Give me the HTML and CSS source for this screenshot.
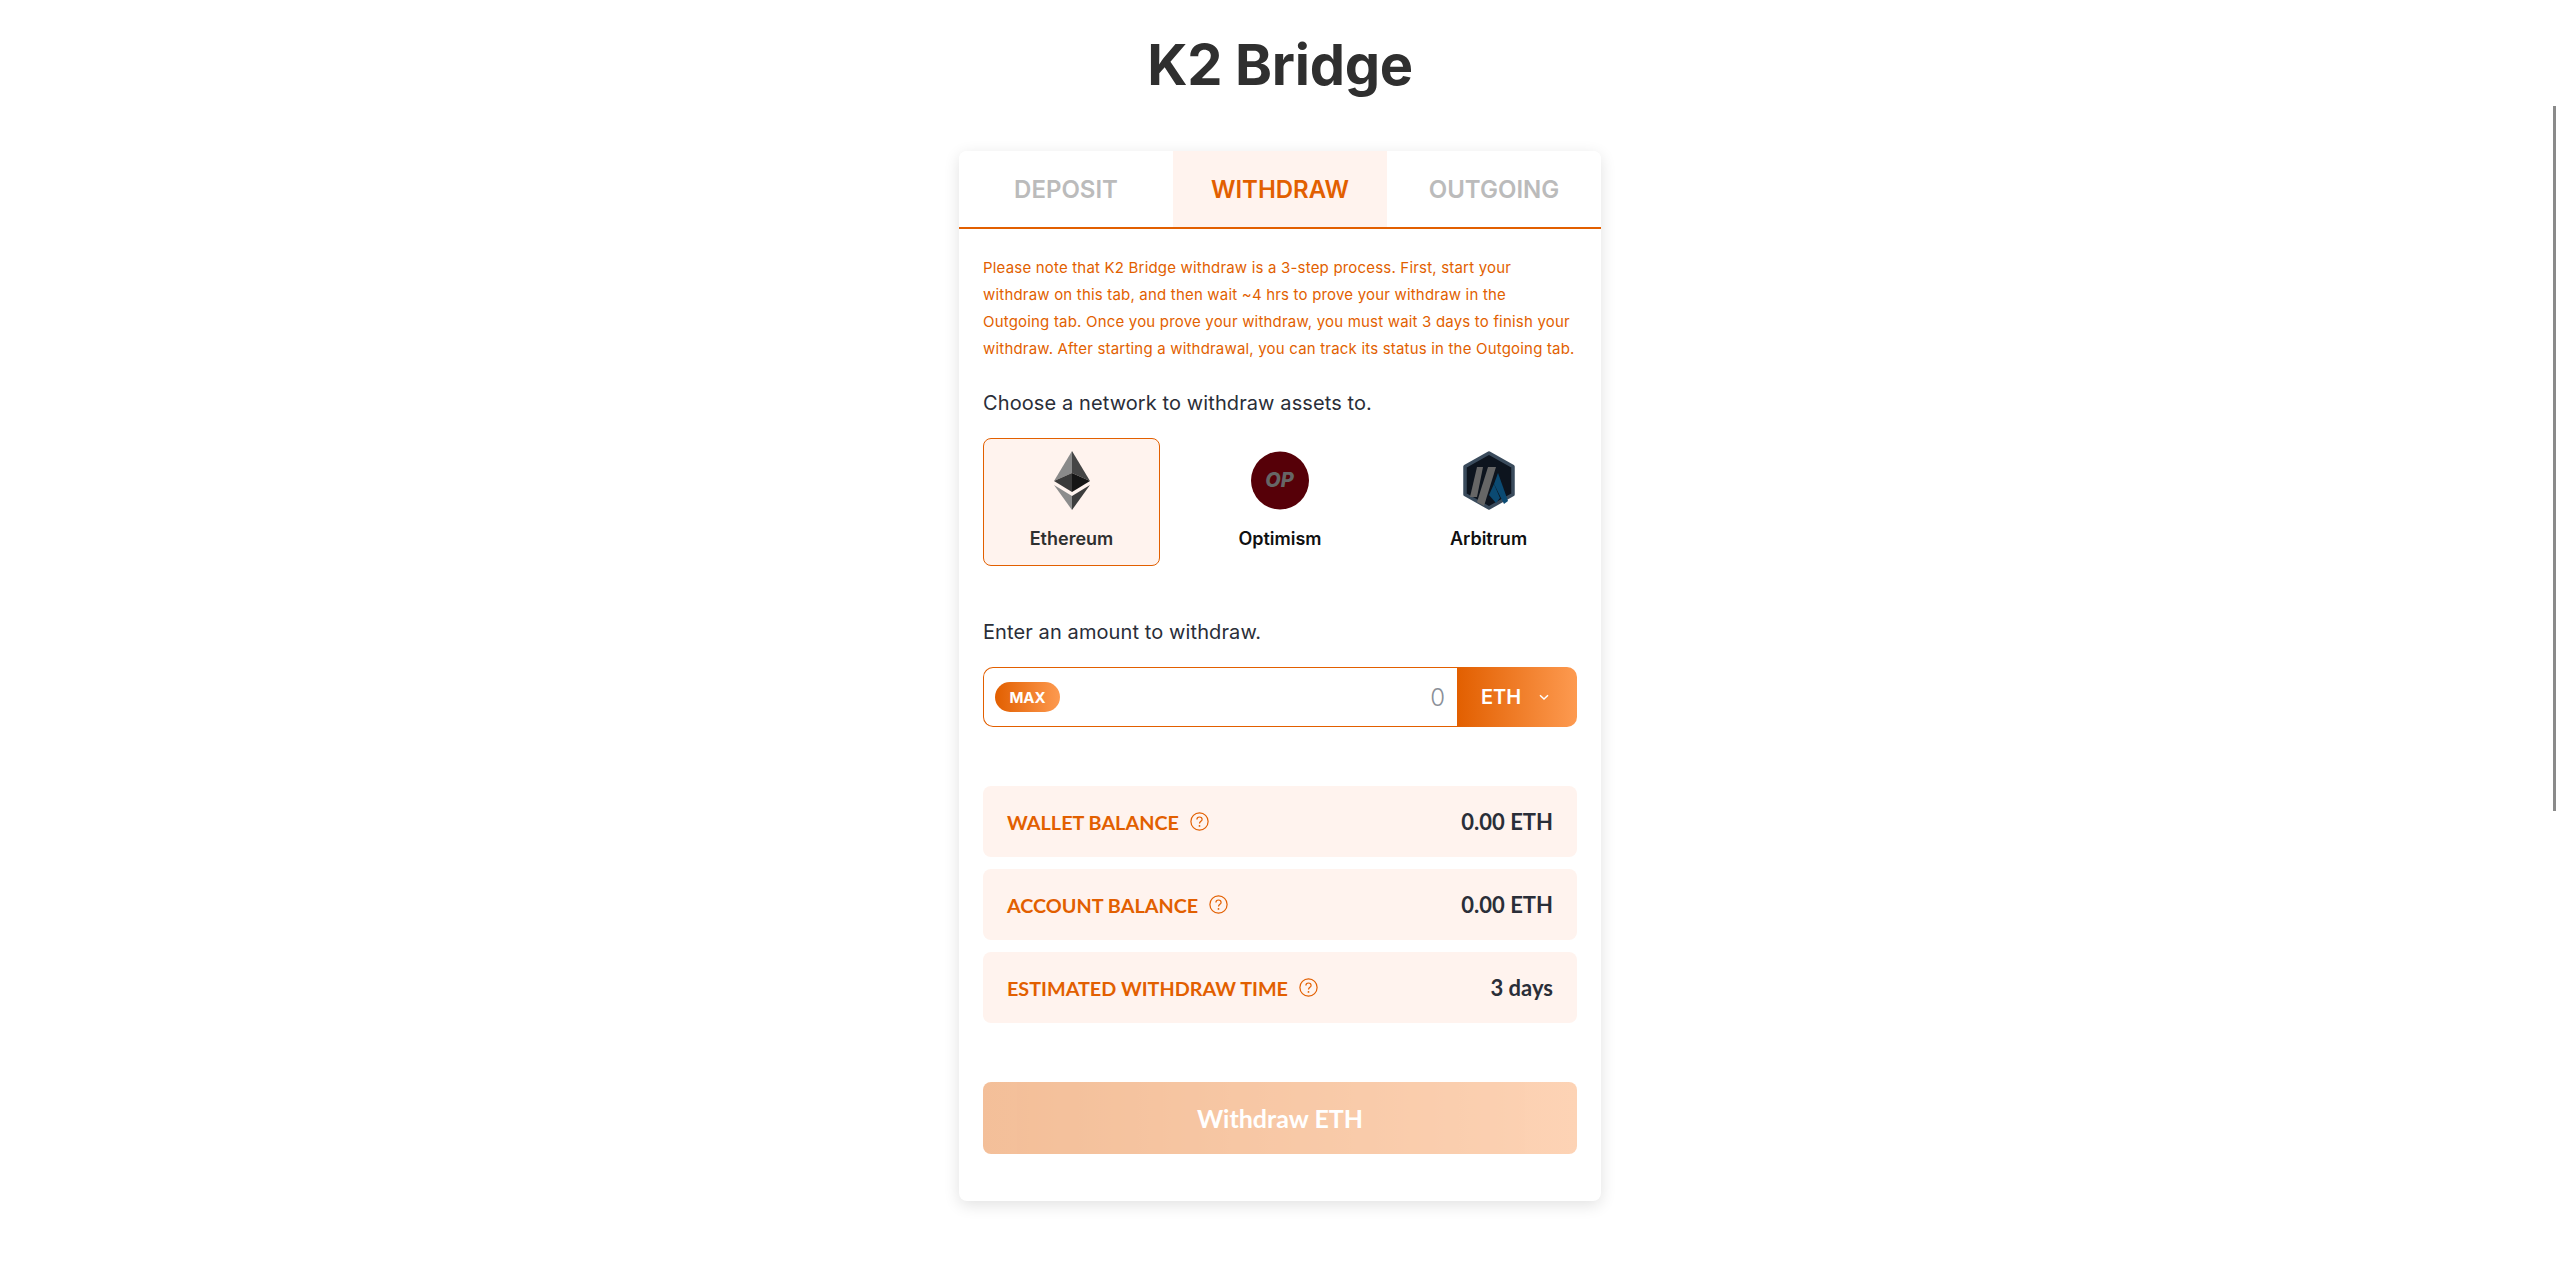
FILE: index.html
```html
<!DOCTYPE html>
<html lang="en">
<head>
<meta charset="utf-8">
<title>K2 Bridge</title>
<link rel="stylesheet" href="styles.css">
</head>
<body>
<main class="page">
  <h1 class="title">K2 Bridge</h1>
  <section class="card">
    <nav class="tabs">
      <button class="tab">DEPOSIT</button>
      <button class="tab tab-active">WITHDRAW</button>
      <button class="tab">OUTGOING</button>
    </nav>
    <div class="body">
      <p class="note">Please note that K2 Bridge withdraw is a 3-step process. First, start your<br>withdraw on this tab, and then wait ~4 hrs to prove your withdraw in the<br>Outgoing tab. Once you prove your withdraw, you must wait 3 days to finish your<br>withdraw. After starting a withdrawal, you can track its status in the Outgoing tab.</p>
      <p class="prompt prompt-network">Choose a network to withdraw assets to.</p>
      <div class="networks">
        <div class="network network-active">
          <svg class="net-icon" width="36" height="59" viewBox="0 0 36 59">
            <polygon points="18,0 0,30 18,22" fill="#8a8a8a"/>
            <polygon points="18,0 36,30 18,22" fill="#454545"/>
            <polygon points="18,22 0,30 18,41" fill="#3a3a3a"/>
            <polygon points="18,22 36,30 18,41" fill="#151515"/>
            <polygon points="0,34 18,59 18,45" fill="#8c8c8c"/>
            <polygon points="36,34 18,59 18,45" fill="#3d3d3d"/>
          </svg>
          <span class="net-name">Ethereum</span>
        </div>
        <div class="network">
          <svg class="net-icon" width="58" height="59" viewBox="0 0 58 59">
            <circle cx="29" cy="29.5" r="29" fill="#560008"/>
            <text class="op-text" x="28.5" y="35.5" text-anchor="middle">OP</text>
          </svg>
          <span class="net-name net-name-dark">Optimism</span>
        </div>
        <div class="network">
          <svg class="net-icon" width="52" height="59" viewBox="0 0 52 59">
            <path d="M26 2 L50 15.5 V43.5 L26 57 L2 43.5 V15.5 Z" fill="#0d141e" stroke="#3a4b5c" stroke-width="3.5" stroke-linejoin="round"/>
            <polygon points="35,22 45,50 41,53 31,33" fill="#0b4a72"/>
            <polygon points="31,33 37,47 33,52 26,44" fill="#0b4a72"/>
            <polygon points="14,16 20,16 14,46 7,46" fill="#666666"/>
            <polygon points="25,16 33,16 21,55 14,51" fill="#666666"/>
          </svg>
          <span class="net-name net-name-dark">Arbitrum</span>
        </div>
      </div>
      <p class="prompt prompt-amount">Enter an amount to withdraw.</p>
      <div class="amount">
        <div class="field">
          <button class="max">MAX</button>
          <input class="amount-input" type="text" placeholder="0">
        </div>
        <button class="token">ETH
          <svg class="chevron" width="10" height="7" viewBox="0 0 10 7"><path d="M1 1.2 L5 5 L9 1.2" fill="none" stroke="#fff" stroke-width="1.5"/></svg>
        </button>
      </div>
      <div class="rows">
        <div class="row">
          <span class="row-label">WALLET BALANCE
            <svg class="help" width="19" height="19" viewBox="0 0 19 19"><circle cx="9.5" cy="9.5" r="8.6" fill="none" stroke="#e25f00" stroke-width="1.2"/><path d="M6.9 7.4 C6.9 4.2 12.1 4.2 12.1 7.4 C12.1 9.4 9.5 9.3 9.5 11.6" fill="none" stroke="#e25f00" stroke-width="1.2"/><circle cx="9.5" cy="13.9" r=".9" fill="#e25f00"/></svg>
          </span>
          <span class="row-value">0.00 ETH</span>
        </div>
        <div class="row">
          <span class="row-label">ACCOUNT BALANCE
            <svg class="help" width="19" height="19" viewBox="0 0 19 19"><circle cx="9.5" cy="9.5" r="8.6" fill="none" stroke="#e25f00" stroke-width="1.2"/><path d="M6.9 7.4 C6.9 4.2 12.1 4.2 12.1 7.4 C12.1 9.4 9.5 9.3 9.5 11.6" fill="none" stroke="#e25f00" stroke-width="1.2"/><circle cx="9.5" cy="13.9" r=".9" fill="#e25f00"/></svg>
          </span>
          <span class="row-value">0.00 ETH</span>
        </div>
        <div class="row">
          <span class="row-label">ESTIMATED WITHDRAW TIME
            <svg class="help" width="19" height="19" viewBox="0 0 19 19"><circle cx="9.5" cy="9.5" r="8.6" fill="none" stroke="#e25f00" stroke-width="1.2"/><path d="M6.9 7.4 C6.9 4.2 12.1 4.2 12.1 7.4 C12.1 9.4 9.5 9.3 9.5 11.6" fill="none" stroke="#e25f00" stroke-width="1.2"/><circle cx="9.5" cy="13.9" r=".9" fill="#e25f00"/></svg>
          </span>
          <span class="row-value">3 days</span>
        </div>
      </div>
      <button class="submit">Withdraw ETH</button>
    </div>
  </section>
</main>
<div class="scroll-thumb"></div>
</body>
</html>
```
FILE: styles.css
```css
* { box-sizing: border-box; }
html, body { margin: 0; height: 100%; overflow: hidden; background: #fff; }
body { font-family: "Inter", "Liberation Sans", sans-serif; color: #2a2e38; }
button { font-family: inherit; border: 0; cursor: pointer; }
p { margin: 0; }

.page { display: flex; flex-direction: column; align-items: center; padding-left: 2px; }
.title { margin: 0; padding-top: 31px; height: 151px; font-size: 56px; line-height: 68px; font-weight: 700; color: #2f2f2f; letter-spacing: -0.3px; }

.card { width: 642px; background: #fff; border-radius: 8px; box-shadow: 0 4px 16px rgba(0, 0, 0, 0.12); overflow: hidden; }

.tabs { display: grid; grid-template-columns: 214px 214px 214px; height: 78px; border-bottom: 2px solid #e25f00; }
.tab { background: #fff; color: #bbbbbb; font-size: 24px; font-weight: 600; padding: 0; }
.tab-active { background: #fff3ee; color: #e25f00; }

.body { padding: 25px 24px 47px; }
.note { font-size: 15px; line-height: 27px; letter-spacing: 0.19px; color: #e25f00; white-space: nowrap; }

.prompt { font-size: 20px; line-height: 24px; letter-spacing: 0.1px; color: #2a2e38; }
.prompt-network { margin-top: 29px; }
.prompt-amount { margin-top: 54px; }

.networks { display: flex; justify-content: space-between; margin-top: 23px; }
.network { width: 177px; height: 128px; border: 1px solid transparent; border-radius: 8px; display: flex; flex-direction: column; align-items: center; padding-top: 12px; }
.network-active { background: #fff3ee; border-color: #e25f00; }
.net-icon { display: block; }
.net-name { margin-top: 17px; font-size: 18px; line-height: 24px; font-weight: 600; color: #2f2f2f; }
.net-name-dark { color: #101010; }
.op-text { font-family: "Inter", sans-serif; font-size: 20px; font-weight: 800; font-style: italic; fill: #666666; }

.amount { display: flex; height: 60px; margin-top: 23px; }
.field { flex: 1; min-width: 0; display: flex; align-items: center; border: 1px solid #e25f00; border-right: 0; border-radius: 10px 0 0 10px; padding-left: 11px; }
.max { flex: none; width: 65px; height: 30px; padding: 0; border-radius: 15px; background: linear-gradient(90deg, #e25f00, #fd9a50); color: #fff; font-size: 15px; font-weight: 700; }
.amount-input { flex: 1; min-width: 0; height: 100%; border: 0; outline: 0; background: transparent; text-align: right; font-family: inherit; font-size: 24px; font-weight: 300; padding: 0 12px 0 0; color: #888; }
.amount-input::placeholder { color: #8a8f98; opacity: 1; }
.token { flex: none; width: 120px; height: 60px; display: flex; align-items: center; justify-content: flex-start; gap: 18px; border-radius: 0 10px 10px 0; background: linear-gradient(90deg, #e25f00, #fd9a50); color: #fff; font-size: 20px; font-weight: 600; padding: 0 0 0 24px; }
.chevron { flex: none; }

.rows { display: flex; flex-direction: column; gap: 12px; margin-top: 59px; }
.row { display: flex; align-items: center; justify-content: space-between; height: 71px; padding: 0 24px; background: #fff3ee; border-radius: 8px; }
.row-label { display: flex; align-items: center; gap: 11px; font-family: "Lato", sans-serif; font-size: 19.8px; font-weight: 700; color: #e25f00; }
.row-value { font-family: "Lato", sans-serif; font-size: 22px; font-weight: 700; color: #2a2e38; }

.submit { display: block; width: 100%; height: 72px; margin-top: 59px; border-radius: 8px; background: linear-gradient(90deg, #e25f00, #fa9146); opacity: 0.4; color: #fff; font-family: "Lato", sans-serif; font-size: 25px; font-weight: 700; }

.scroll-thumb { position: fixed; top: 106px; right: 2px; width: 3px; height: 705px; background: #8a8a8a; }
```
